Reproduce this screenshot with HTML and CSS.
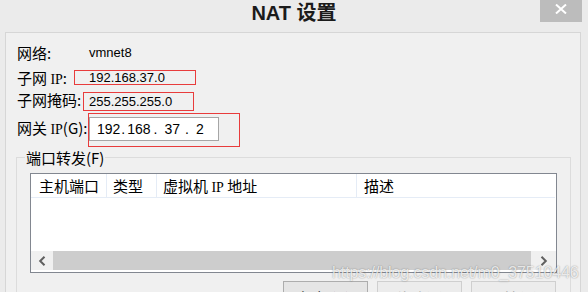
FILE: index.html
```html
<!DOCTYPE html>
<html lang="zh-CN">
<head>
<meta charset="utf-8">
<title>NAT 设置</title>
<link rel="stylesheet" href="styles.css">
</head>
<body>
<div class="window">
  <header class="titlebar">
    <span class="spacer"></span>
    <h1 class="title">NAT 设置</h1>
    <div class="close-wrap">
      <button class="close" aria-label="关闭">
        <svg width="12" height="10" viewBox="0 0 12 10"><path d="M1 0.5 L11 9.5 M11 0.5 L1 9.5" stroke="#fff" stroke-width="2" fill="none"/></svg>
      </button>
    </div>
  </header>
  <main class="panel">
    <div class="row row1">
      <span class="label l-net">网络:</span>
      <span class="value">vmnet8</span>
    </div>
    <div class="row row2">
      <span class="label l-sub">子网 <span class="lat">IP</span>:</span>
      <span class="box box-sub value">192.168.37.0</span>
    </div>
    <div class="row row3">
      <span class="label l-mask">子网掩码:</span>
      <span class="box box-mask value">255.255.255.0</span>
    </div>
    <div class="row row4">
      <span class="label l-gw">网关 <span class="lat">IP</span>(G):</span>
      <span class="box box-gw">
        <span class="ipinput">
          <span class="seg s1">192</span><span class="seg s2">.</span><span class="seg s3">168</span><span class="seg s4">.</span><span class="seg s5">37</span><span class="seg s6">.</span><span class="seg s7">2</span>
        </span>
      </span>
    </div>
    <section class="group">
      <div class="group-title">端口转发(F)</div>
      <div class="listview">
        <div class="lv-header">
          <div class="col c1">主机端口</div>
          <div class="col c2">类型</div>
          <div class="col c3">虚拟机 <span class="lat">IP</span> 地址</div>
          <div class="col c4">描述</div>
        </div>
        <div class="lv-body"></div>
        <div class="hscroll">
          <div class="sb-btn sb-left">
            <svg width="8" height="10" viewBox="0 0 8 10"><path d="M6.5 0.8 L2.2 5 L6.5 9.2" stroke="#5f5f5f" stroke-width="2" fill="none"/></svg>
          </div>
          <div class="sb-thumb"></div>
          <div class="sb-btn sb-right">
            <svg width="8" height="10" viewBox="0 0 8 10"><path d="M1.5 0.8 L5.8 5 L1.5 9.2" stroke="#5f5f5f" stroke-width="2" fill="none"/></svg>
          </div>
        </div>
      </div>
      <div class="buttons">
        <button class="btn">添加(A)</button>
        <button class="btn disabled">移除(R)</button>
        <button class="btn disabled">属性(P)</button>
      </div>
    </section>
  </main>
  <div class="watermark">https://blog.csdn.net/m0_37510446</div>
</div>
</body>
</html>
```
FILE: styles.css
```css
body {
  margin: 0;
  background: #ebebeb;
}

.window {
  position: relative;
  width: 588px;
  height: 292px;
  background: #ebebeb;
  overflow: hidden;
  font-family: "Noto Sans CJK SC", sans-serif;
  color: #000;
}

.titlebar {
  display: grid;
  grid-template-columns: 1fr auto 1fr;
  height: 32px;
}

.title {
  margin: 0;
  font: bold 20px/26px "Liberation Sans", "Noto Sans CJK SC", sans-serif;
  color: #1b1b1b;
}

.close-wrap {
  justify-self: end;
  margin-right: 6px;
}

.close {
  display: flex;
  justify-content: center;
  align-items: flex-start;
  width: 42px;
  height: 22px;
  padding: 4px 0 0;
  border: 0;
  background: #bcbcbc;
}

.panel {
  box-sizing: border-box;
  margin-left: 5px;
  width: 576px;
  height: 260px;
  padding: 10px 0 0 10px;
  background: #f0f0f0;
  border: 1px solid #d6d6d6;
  border-bottom: 0;
}

.row {
  display: flex;
  align-items: flex-start;
  padding-left: 1px;
}

.label {
  flex: none;
  font-size: 15px;
  line-height: 20px;
}

.lat {
  font-family: "Liberation Serif", serif;
  font-size: 14px;
}

.value {
  font: 13px/20px "Liberation Sans", sans-serif;
}

.box {
  box-sizing: border-box;
  border: 1px solid #e83c3c;
  flex: none;
}

.row1 { height: 20px; }
.l-net { width: 72px; }

.row2 { height: 20px; margin-top: 5px; }
.l-sub { width: 57px; }
.box-sub {
  width: 122px;
  height: 15px;
  margin-top: 2px;
  padding-left: 14px;
  line-height: 13px;
}

.row3 { height: 21px; margin-top: 2px; }
.l-mask { width: 66px; }
.box-mask {
  width: 111px;
  height: 19px;
  margin-top: 2px;
  padding-left: 5px;
  line-height: 17px;
}

.row4 { height: 34px; margin-top: 2px; }
.l-gw { width: 71px; margin-top: 5px; }
.box-gw {
  width: 152px;
  height: 34px;
  padding-top: 3px;
}

.ipinput {
  display: flex;
  box-sizing: border-box;
  width: 130px;
  height: 24px;
  padding-left: 7px;
  border: 1px solid #a6a6a6;
  background: #fff;
  font: 14px/22px "Liberation Sans", sans-serif;
}

.s2 { margin-left: 1px; }
.s3 { margin-left: 2px; }
.s4 { margin-left: 3px; }
.s5 { margin-left: 7px; }
.s6 { margin-left: 5px; }
.s7 { margin-left: 7px; }

.group {
  box-sizing: border-box;
  width: 555px;
  height: 140px;
  margin-top: 10px;
  border: 1px solid #dcdcdc;
  border-bottom: 0;
}

.group-title {
  width: fit-content;
  margin: -9px 0 0 8px;
  padding: 0 1px;
  font-size: 15px;
  line-height: 18px;
  background: #f0f0f0;
}

.listview {
  display: flex;
  flex-direction: column;
  box-sizing: border-box;
  width: 527px;
  height: 100px;
  margin: 6px 0 0 13px;
  border: 1px solid #828790;
  background: #fff;
}

.lv-header {
  display: flex;
  box-sizing: border-box;
  height: 24px;
  margin-right: 1px;
  border-bottom: 1px solid #e5ecf6;
}

.col {
  box-sizing: border-box;
  padding-top: 1px;
  font-size: 15px;
  line-height: 22px;
  border-right: 1px solid #e5ecf6;
  white-space: nowrap;
}

.c1 { width: 76px; padding-left: 8px; }
.c2 { width: 50px; padding-left: 6px; }
.c3 { width: 200px; padding-left: 6px; }
.c4 { flex: 1; padding-left: 7px; border-right: 0; }

.lv-body { height: 53px; }

.hscroll {
  display: flex;
  height: 19px;
}

.sb-btn {
  display: flex;
  align-items: center;
  justify-content: center;
  background: #f0f0f0;
}

.sb-left { width: 22px; }
.sb-right { width: 25px; }

.sb-thumb {
  flex: 1;
  background: #cdcdcd;
}

.buttons {
  display: flex;
  justify-content: flex-end;
  gap: 9px;
  width: 526px;
  margin: 8px 0 0 13px;
}

.btn {
  box-sizing: border-box;
  width: 85px;
  height: 30px;
  padding: 4px 0 0;
  font: 15px/20px "Noto Sans CJK SC", sans-serif;
  color: #000;
  background: #e5e5e5;
  border: 1px solid #adadad;
  text-align: center;
}

.btn.disabled {
  color: #a0a0a0;
  background: #ececec;
  border-color: #cfcfcf;
}

.watermark {
  position: absolute;
  left: 332px;
  top: 265px;
  font: 16px/16px "Liberation Sans", sans-serif;
  letter-spacing: -0.1px;
  color: rgba(255, 255, 255, 0.8);
  text-shadow: 0 0 1.5px rgba(0, 0, 0, 0.45);
  white-space: nowrap;
}
```
